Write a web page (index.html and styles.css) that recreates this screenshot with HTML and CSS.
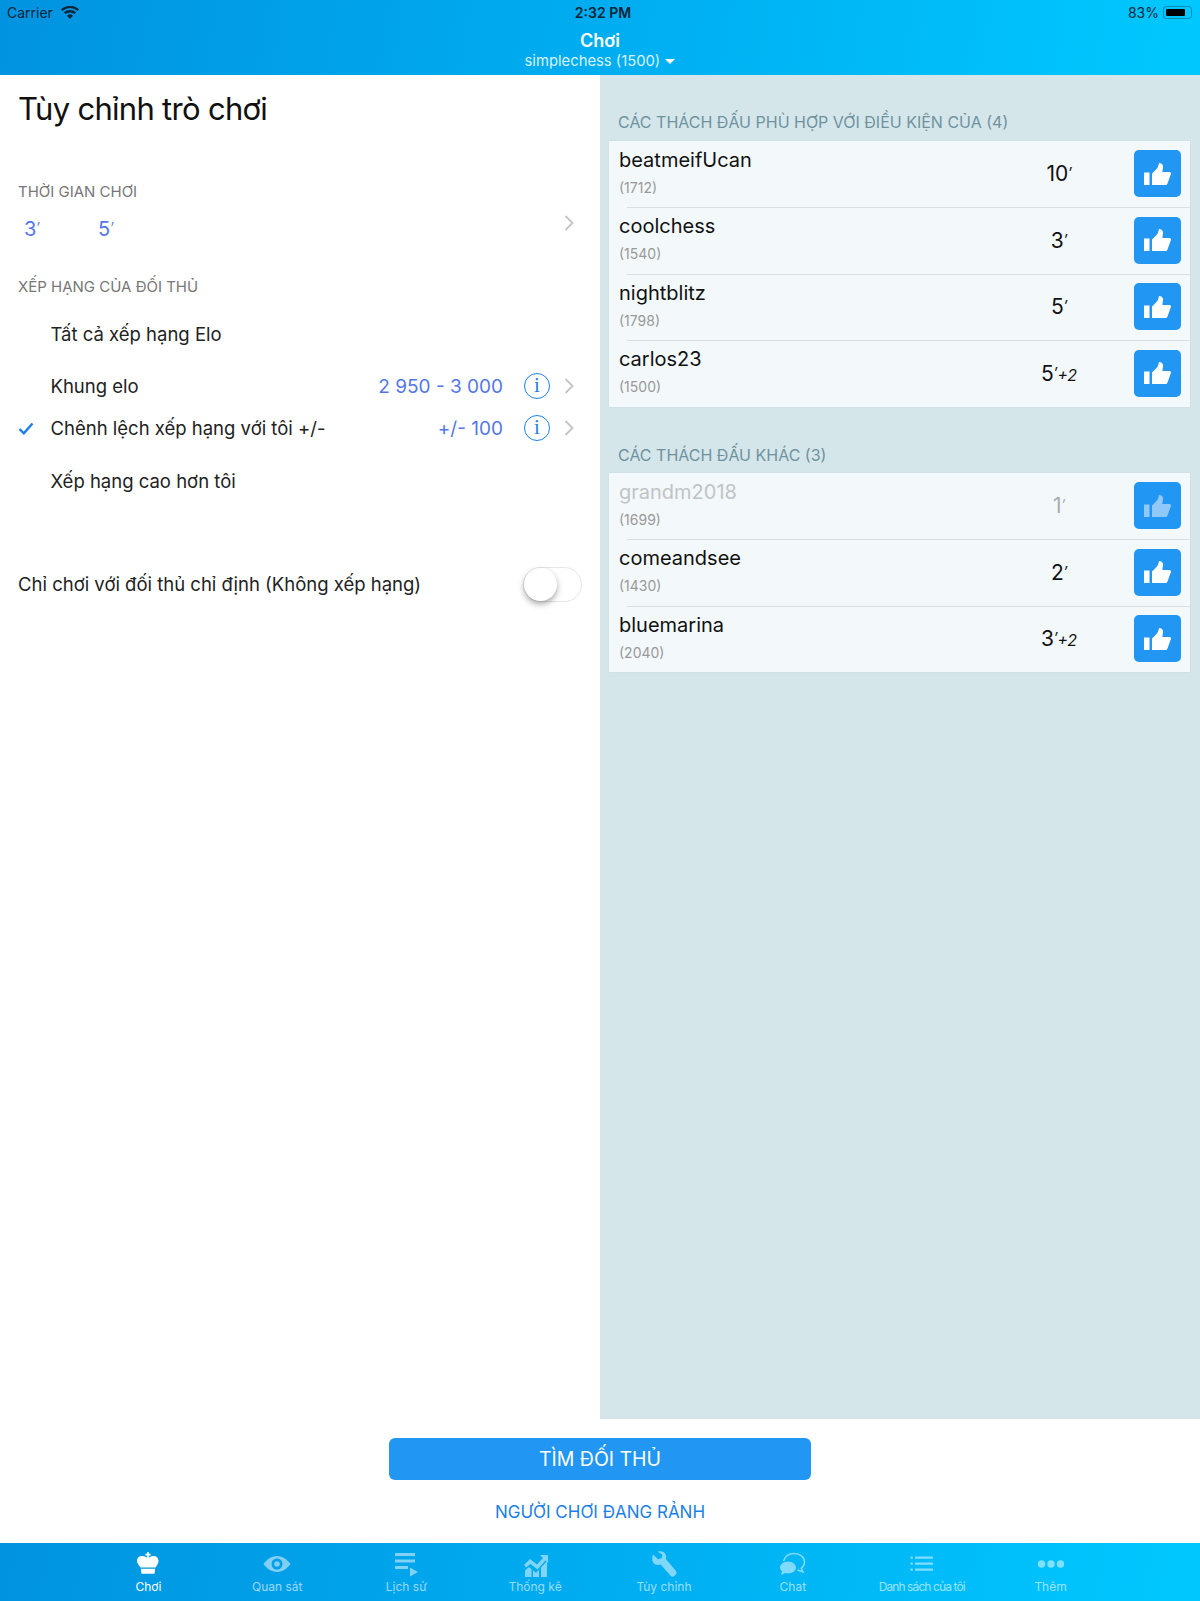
FILE: index.html
```html
<!DOCTYPE html>
<html lang="vi">
<head>
    <meta charset="UTF-8">
    <meta name="viewport" content="width=device-width, initial-scale=1.0">
    <title>Chơi</title>
    <link rel="stylesheet" href="styles.css">
</head>
<body>
    <header class="top-bar">
        <div class="status-bar">
            <div class="status-left">
                <span>Carrier</span>
                <svg class="wifi" viewBox="0 0 18 13" width="18" height="13">
                    <path d="M9 13 6 9.700a4.500 4.500 0 0 1 6 0zM4.500 8.100 2.900 6.300a9.200 9.200 0 0 1 12.200 0L13.500 8.100a6.800 6.800 0 0 0-9 0zM1.500 4.900 0 3.200a13.500 13.500 0 0 1 18 0L16.500 4.900a11.200 11.200 0 0 0-15 0z" fill="#0b2438"/>
                </svg>
            </div>
            <div class="status-time">2:32 PM</div>
            <div class="status-right">
                <span>83%</span>
                <span class="battery"><span class="battery-level"></span></span>
            </div>
        </div>
        <div class="nav-title">Chơi</div>
        <div class="nav-sub">simplechess (1500) <span class="caret"></span></div>
    </header>

    <main class="content">
        <section class="left-panel">
            <h1 class="page-title">Tùy chỉnh trò chơi</h1>

            <h2 class="left-label label-time">THỜI GIAN CHƠI</h2>
            <div class="time-row">
                <span class="time-value">3<i>′</i></span>
                <span class="time-value">5<i>′</i></span>
                <svg class="chevron time-chevron" viewBox="0 0 10 16" width="10" height="16"><path d="M1.500 1l7 7-7 7" fill="none" stroke="#c4c4c8" stroke-width="1.800"/></svg>
            </div>

            <h2 class="left-label label-rating">XẾP HẠNG CỦA ĐỐI THỦ</h2>
            <div class="option option-all">
                <span class="option-text">Tất cả xếp hạng Elo</span>
            </div>
            <div class="option option-range">
                <span class="option-text">Khung elo</span>
                <span class="option-value">2 950 - 3 000</span>
                <span class="info">i</span>
                <svg class="chevron" viewBox="0 0 10 16" width="10" height="16"><path d="M1.500 1l7 7-7 7" fill="none" stroke="#c4c4c8" stroke-width="1.800"/></svg>
            </div>
            <div class="option option-diff">
                <svg class="check" viewBox="0 0 16 13" width="16" height="13"><path d="M1.500 7l4.300 4.300L14.500 1.500" fill="none" stroke="#1c7fe6" stroke-width="2.400"/></svg>
                <span class="option-text">Chênh lệch xếp hạng với tôi +/-</span>
                <span class="option-value">+/- 100</span>
                <span class="info">i</span>
                <svg class="chevron" viewBox="0 0 10 16" width="10" height="16"><path d="M1.500 1l7 7-7 7" fill="none" stroke="#c4c4c8" stroke-width="1.800"/></svg>
            </div>
            <div class="option option-higher">
                <span class="option-text">Xếp hạng cao hơn tôi</span>
            </div>

            <div class="switch-row">
                <span class="switch-text">Chỉ chơi với đối thủ chỉ định (Không xếp hạng)</span>
                <span class="switch"><span class="switch-knob"></span></span>
            </div>
        </section>

        <section class="right-panel">
            <h2 class="list-label label-first">CÁC THÁCH ĐẤU PHÙ HỢP VỚI ĐIỀU KIỆN CỦA (4)</h2>
            <div class="list">
                <div class="match">
                    <div class="match-who"><div class="match-name">beatmeifUcan</div><div class="match-elo">(1712)</div></div>
                    <div class="match-time">10<i>′</i></div>
                    <button class="like"><svg viewBox="0 0 27 22" width="27" height="22"><use href="#thumb"/></svg></button>
                </div>
                <div class="match">
                    <div class="match-who"><div class="match-name">coolchess</div><div class="match-elo">(1540)</div></div>
                    <div class="match-time">3<i>′</i></div>
                    <button class="like"><svg viewBox="0 0 27 22" width="27" height="22"><use href="#thumb"/></svg></button>
                </div>
                <div class="match">
                    <div class="match-who"><div class="match-name">nightblitz</div><div class="match-elo">(1798)</div></div>
                    <div class="match-time">5<i>′</i></div>
                    <button class="like"><svg viewBox="0 0 27 22" width="27" height="22"><use href="#thumb"/></svg></button>
                </div>
                <div class="match">
                    <div class="match-who"><div class="match-name">carlos23</div><div class="match-elo">(1500)</div></div>
                    <div class="match-time">5<i>′</i><em>+2</em></div>
                    <button class="like"><svg viewBox="0 0 27 22" width="27" height="22"><use href="#thumb"/></svg></button>
                </div>
            </div>

            <h2 class="list-label label-second">CÁC THÁCH ĐẤU KHÁC (3)</h2>
            <div class="list">
                <div class="match match-off">
                    <div class="match-who"><div class="match-name">grandm2018</div><div class="match-elo">(1699)</div></div>
                    <div class="match-time">1<i>′</i></div>
                    <button class="like"><svg viewBox="0 0 27 22" width="27" height="22"><use href="#thumb"/></svg></button>
                </div>
                <div class="match">
                    <div class="match-who"><div class="match-name">comeandsee</div><div class="match-elo">(1430)</div></div>
                    <div class="match-time">2<i>′</i></div>
                    <button class="like"><svg viewBox="0 0 27 22" width="27" height="22"><use href="#thumb"/></svg></button>
                </div>
                <div class="match">
                    <div class="match-who"><div class="match-name">bluemarina</div><div class="match-elo">(2040)</div></div>
                    <div class="match-time">3<i>′</i><em>+2</em></div>
                    <button class="like"><svg viewBox="0 0 27 22" width="27" height="22"><use href="#thumb"/></svg></button>
                </div>
            </div>
        </section>
    </main>

    <div class="actions">
        <button class="find-btn">TÌM ĐỐI THỦ</button>
        <a class="free-link">NGƯỜI CHƠI ĐANG RẢNH</a>
    </div>

    <nav class="tab-bar">
        <div class="tab tab-active">
            <svg viewBox="0 0 28 28" width="28" height="28"><path d="M13.200 2h1.600v1.800h1.800v1.600h-1.800v2.300c1.300-1.100 2.900-1.700 4.600-1.700 2.900 0 5.100 2 5.100 4.800 0 2.900-1.800 4.700-3 6.700H6.500C5.300 15.500 3 13.700 3 10.800 3 8 5.200 6 8.100 6c1.700 0 3.800.6 5.100 1.700V5.400h-1.800V3.800h1.800zM6.800 18.800h14.400l-.7 5H7.500z" fill="#fff"/></svg>
            <span>Chơi</span>
        </div>
        <div class="tab">
            <svg viewBox="0 0 28 28" width="28" height="28"><path fill-rule="evenodd" d="M14 6c6 0 10.800 4.200 13.500 8-2.700 3.800-7.500 8-13.500 8S3.200 17.800.5 14C3.200 10.200 8 6 14 6zm0 2.500a5.500 5.500 0 1 0 0 11 5.500 5.500 0 0 0 0-11zm0 2.700a2.800 2.800 0 1 1 0 5.600 2.800 2.800 0 0 1 0-5.600z" fill="#fff"/></svg>
            <span>Quan sát</span>
        </div>
        <div class="tab">
            <svg viewBox="0 0 28 28" width="28" height="28"><path d="M3 3h20v3H3zM3 9.500h20v3H3zM3 16h13v3H3zM18 17.500l8 4.500-8 4.500z" fill="#fff"/></svg>
            <span>Lịch sử</span>
        </div>
        <div class="tab">
            <svg viewBox="0 0 28 28" width="28" height="28"><path d="M4 27v-6.500l4-3.500 2.500 2.200V27zM12 27v-6.700l3 2.500 3-3V27zM20 27V17.500l6-6.500V27zM3 15l6-6 7 5.500L22 8l-3-3h8v8l-2.500-2.500-8 9-7-5.500L5 17.500z" fill="#fff"/></svg>
            <span>Thống kê</span>
        </div>
        <div class="tab">
            <svg viewBox="0 0 28 28" width="28" height="28"><path d="M4 3.500 9 8.300l3.600-1L13.500 3.800 8.800.8c3.500-1.300 7 .2 8 3.200.5 1.500.4 2.700 0 4l10 11.700c1 1.200 1 2.700 0 3.700l-1.600 1.500c-1 1-2.600 1-3.600-.1L11.700 13.500c-3 1-6 .5-7.600-2C3 9.500 3 6 4 3.500z" fill="#fff" transform="translate(-1 1)"/></svg>
            <span>Tùy chỉnh</span>
        </div>
        <div class="tab">
            <svg viewBox="0 0 28 28" width="28" height="28"><path d="M4.500 11C6 6.500 10 3.500 15 3.500c5.800 0 10.500 3.700 10.500 8.500 0 2.700-1.300 4.800-3.300 6.300l1.800 3.700-5.500-2" fill="none" stroke="#fff" stroke-width="1.500"/><path d="M9 11.500c4.400 0 8 2.800 8 6s-3.600 6-8 6c-1 0-1.800-.1-2.600-.4L2 25l1-3.800C1.800 20.200 1 18.900 1 17.500c0-3.200 3.600-6 8-6z" fill="#fff"/></svg>
            <span>Chat</span>
        </div>
        <div class="tab">
            <svg viewBox="0 0 28 28" width="28" height="28"><path d="M7 6.500h18v2.200H7zM7 12.500h18v2.200H7zM7 18.500h18v2.200H7zM2.500 6.500h2.200v2.200H2.500zM2.500 12.500h2.200v2.200H2.500zM2.500 18.500h2.200v2.200H2.500z" fill="#fff"/></svg>
            <span class="tab-long">Danh sách của tôi</span>
        </div>
        <div class="tab">
            <svg viewBox="0 0 28 28" width="28" height="28"><circle cx="4.500" cy="14" r="3.700" fill="#fff"/><circle cx="14" cy="14" r="3.700" fill="#fff"/><circle cx="23.500" cy="14" r="3.700" fill="#fff"/></svg>
            <span>Thêm</span>
        </div>
    </nav>

    <svg class="icon-defs" width="0" height="0">
        <symbol id="thumb" viewBox="0 0 27 22">
            <path d="M0 9.500h5.500V22H0zM8 10.500l4.500-4.500c1.500-1.700 2-3.500 2.500-6 2.800 0 4.500 2 4 4.500L18.300 9h7.200c1 0 1.700 1 1.400 2l-3.400 9.500c-.4 1-1.100 1.500-2 1.500H8z" fill="currentColor"/>
        </symbol>
    </svg>
</body>
</html>
```
FILE: styles.css
```css
* {
    box-sizing: border-box;
}
body {
    margin: 0;
    width: 1200px;
    height: 1601px;
    display: flex;
    flex-direction: column;
    font-family: 'Inter', 'Noto Sans', sans-serif;
    color: #111;
    background-color: #fff;
    overflow: hidden;
}
h1, h2 {
    margin: 0;
    font-weight: 400;
}

/* top bar */
.top-bar {
    height: 75px;
    flex: none;
    color: #fff;
    background: linear-gradient(100deg, #0193e0 0%, #00adf0 50%, #00c8ff 100%);
    text-align: center;
}
.status-bar {
    height: 24px;
    padding: 0 8px 0 7px;
    display: grid;
    grid-template-columns: 1fr auto 1fr;
    align-items: center;
    font-size: 14px;
    color: #0b2438;
}
.status-left {
    display: flex;
    align-items: center;
    gap: 8px;
}
.status-time {
    margin-left: 7px;
    font-weight: 600;
}
.status-right {
    display: flex;
    justify-content: flex-end;
    align-items: center;
    gap: 4px;
}
.battery {
    width: 29px;
    height: 13px;
    padding: 2px;
    border: 1px solid rgba(11, 36, 56, 0.35);
    border-radius: 3px;
}
.battery-level {
    display: block;
    width: 83%;
    height: 100%;
    background-color: #000;
    border-radius: 1px;
}
.nav-title {
    font-size: 18px;
    font-weight: 600;
    line-height: 28px;
    height: 28px;
    padding-top: 3px;
}
.nav-sub {
    font-size: 14.800px;
    line-height: 18px;
    color: #d8f2ff;
}
.caret {
    display: inline-block;
    width: 0;
    height: 0;
    margin-left: 1px;
    vertical-align: 2px;
    border-left: 5px solid transparent;
    border-right: 5px solid transparent;
    border-top: 5px solid #fff;
}

/* main area */
.content {
    height: 1344px;
    flex: none;
    display: flex;
}
.left-panel {
    width: 600px;
    padding: 0 18px;
}
.page-title {
    font-size: 31px;
    line-height: 40px;
    margin-top: 14px;
    letter-spacing: -0.700px;
}
.left-label {
    font-size: 15px;
    line-height: 18px;
    color: #777;
}
.label-time {
    margin-top: 54px;
}
.time-row {
    height: 38px;
    margin-top: 9px;
    padding-left: 6px;
    display: flex;
    align-items: center;
    gap: 56px;
    font-size: 20px;
    color: #5577e6;
}
.time-value {
    width: 18px;
}
.time-value i {
    font-size: 14px;
    vertical-align: 3px;
}
.time-chevron {
    margin-left: auto;
    margin-right: 8px;
    margin-top: -12px;
}
.label-rating {
    margin-top: 30px;
}
.option {
    position: relative;
    display: flex;
    align-items: center;
    padding-left: 32.500px;
    font-size: 18.500px;
    height: 30px;
    color: #222;
}
.option-all {
    margin-top: 23px;
}
.option-range {
    margin-top: 22px;
}
.option-diff {
    margin-top: 12px;
}
.option-higher {
    margin-top: 23px;
}
.option-text {
    flex: 1;
}
.option-value {
    font-size: 19px;
    color: #5577e6;
}
.info {
    width: 26px;
    height: 26px;
    margin-left: 21px;
    border: 1.500px solid #1c7fe6;
    border-radius: 50%;
    color: #1c7fe6;
    font-family: 'Liberation Serif', serif;
    font-size: 21px;
    line-height: 23px;
    text-align: center;
}
.chevron {
    flex: none;
}
.option .chevron {
    margin-left: 14px;
    margin-right: 8px;
}
.check {
    position: absolute;
    left: 0;
    top: 9px;
}
.switch-row {
    height: 36px;
    margin-top: 70px;
    display: flex;
    align-items: center;
    justify-content: space-between;
    font-size: 18.500px;
    color: #222;
}
.switch {
    width: 59px;
    height: 35px;
    margin-right: 0;
    border: 1px solid #e6e6e6;
    border-radius: 18px;
}
.switch-knob {
    display: block;
    width: 33px;
    height: 33px;
    border-radius: 50%;
    background-color: #fff;
    box-shadow: 0 3px 6px rgba(0, 0, 0, 0.35);
}

.right-panel {
    width: 600px;
    padding: 0 10px 0 9px;
    background-color: #d4e6ea;
}
.list-label {
    padding-left: 9px;
    font-size: 16px;
    line-height: 20px;
    color: #6f929e;
}
.label-first {
    margin-top: 37px;
    margin-bottom: 8.500px;
}
.label-second {
    margin-top: 38px;
    margin-bottom: 8px;
}
.list {
    background-color: #f3f8fb;
    box-shadow: 0 0 1px rgba(0, 0, 0, 0.12);
}
.match {
    position: relative;
    height: 66.500px;
    padding: 0 9px 0 10px;
    display: flex;
    align-items: center;
}
.match + .match::before {
    content: "";
    position: absolute;
    top: 0;
    left: 18px;
    right: 0;
    height: 1px;
    background-color: #d9dfe2;
}
.match-who {
    flex: 1;
    padding-bottom: 3px;
}
.match-name {
    font-size: 20px;
    line-height: 24px;
    color: #111;
}
.match-elo {
    margin-top: 7px;
    font-size: 14px;
    line-height: 18px;
    color: #999;
}
.match-time {
    width: 100px;
    margin-right: 25px;
    text-align: center;
    font-size: 21px;
}
.match-time i {
    font-size: 15px;
    vertical-align: 3px;
}
.match-time em {
    font-size: 16px;
}
.match-off .match-name {
    color: #c0c4c6;
}
.match-off .match-time {
    color: #a8acae;
}
.match-off .like {
    color: #90c8fa;
}
.like {
    width: 47px;
    height: 47px;
    padding: 0;
    display: flex;
    align-items: center;
    justify-content: center;
    border: none;
    border-radius: 5px;
    color: #fff;
    background-color: #2196f3;
}
.icon-defs {
    position: absolute;
}

/* bottom */
.actions {
    height: 124px;
    flex: none;
    padding-top: 19px;
    display: flex;
    flex-direction: column;
    align-items: center;
}
.find-btn {
    width: 422px;
    height: 42px;
    border: none;
    border-radius: 6px;
    color: #fff;
    background-color: #2196f3;
    font-family: inherit;
    font-size: 19.500px;
}
.free-link {
    margin-top: 21px;
    font-size: 17px;
    line-height: 22px;
    color: #1c7fe6;
}
.tab-bar {
    height: 58px;
    flex: none;
    padding: 0 85px 0 84px;
    display: grid;
    grid-template-columns: repeat(8, 1fr);
    background: linear-gradient(100deg, #0193e0 0%, #00adf0 50%, #00c8ff 100%);
}
.tab {
    display: flex;
    flex-direction: column;
    align-items: center;
    padding-top: 7px;
    font-size: 12px;
    color: rgba(255, 255, 255, 0.6);
}
.tab svg {
    opacity: 0.5;
}
.tab span {
    margin-top: 1px;
    white-space: nowrap;
}
.tab .tab-long {
    letter-spacing: -0.900px;
}
.tab-active {
    color: #fff;
}
.tab-active svg {
    opacity: 1;
}
```
